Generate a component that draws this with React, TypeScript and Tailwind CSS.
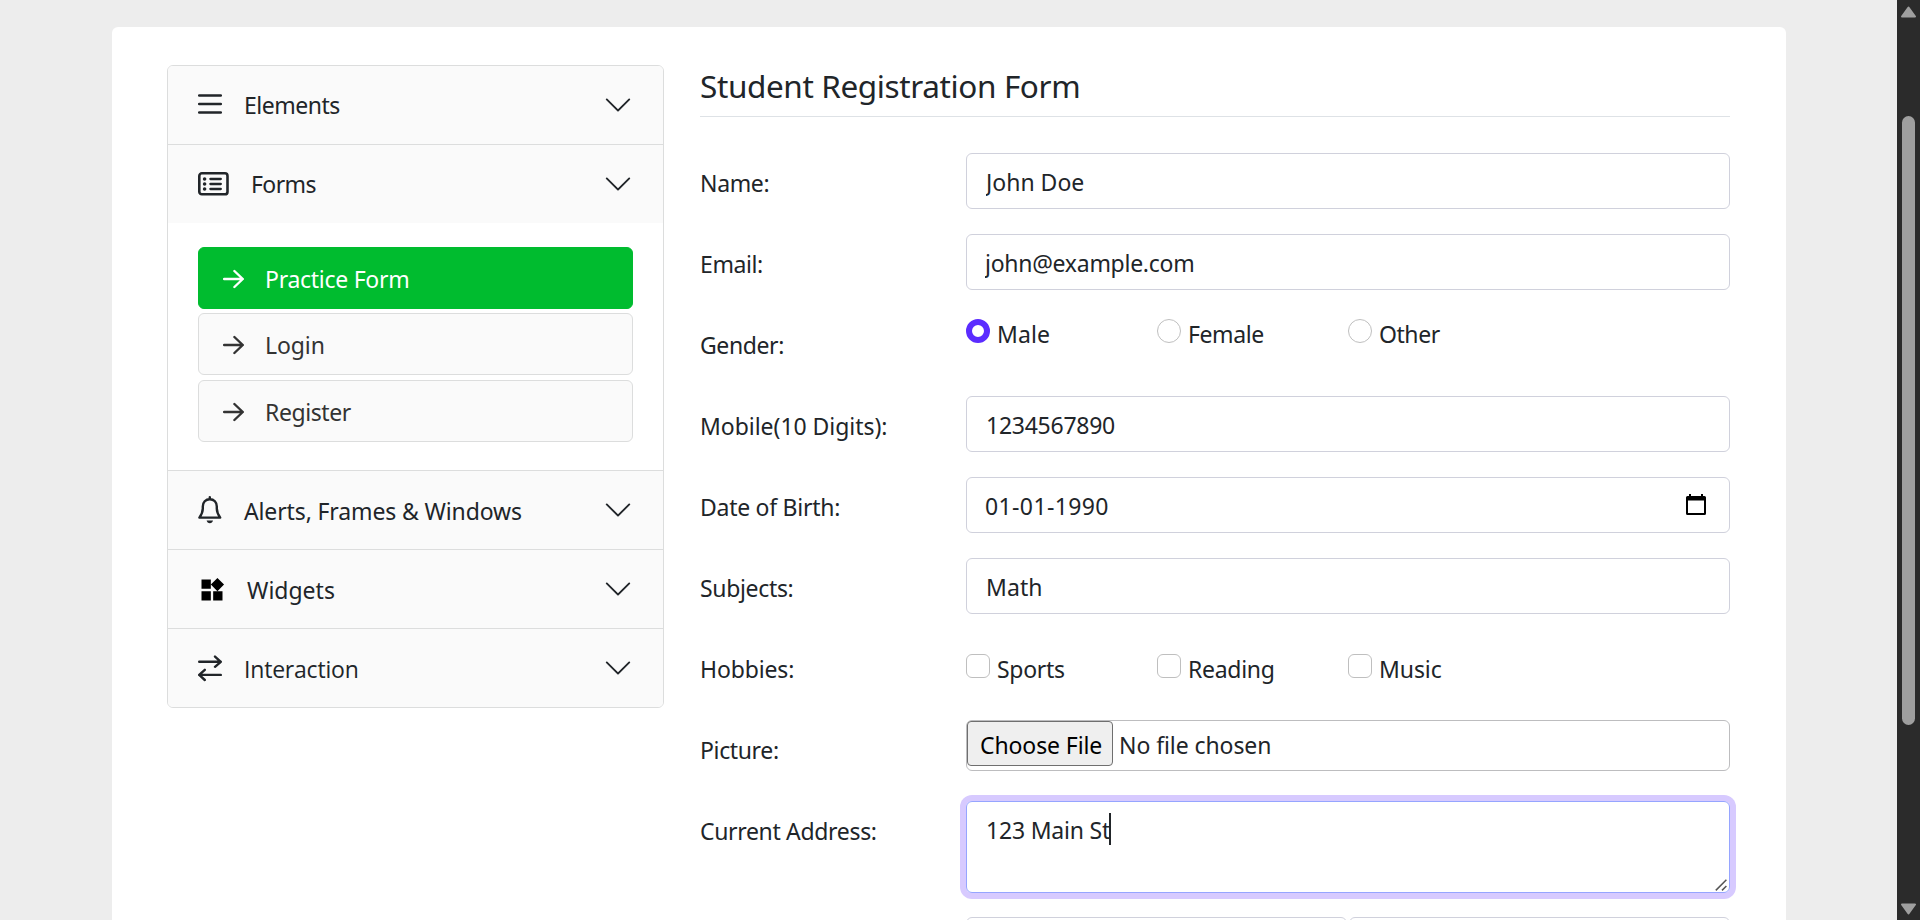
import type { ReactNode } from "react";
import { MdWidgets } from "react-icons/md";

const line = { fill: "none", stroke: "currentColor", strokeLinecap: "round", strokeLinejoin: "round" } as const;

function BarsIcon() {
  return (
    <svg className="h-6 w-6 shrink-0" viewBox="0 0 24 24" strokeWidth="2.5" {...line}>
      <path d="M1.2 2.5h21.6M1.2 11h21.6M1.2 19.5h21.6" />
    </svg>
  );
}

function ListCardIcon() {
  return (
    <svg className="h-6 w-[31px] shrink-0" viewBox="0 0 31 24" {...line}>
      <rect x="1.3" y="1.3" width="28.2" height="21" rx="2.6" strokeWidth="2.6" />
      <path d="M12.4 7h10.4M12.4 12h10.4M12.4 17h10.4" strokeWidth="2.3" />
      <g fill="currentColor" stroke="none">
        <circle cx="6.6" cy="7" r="1.8" />
        <circle cx="6.6" cy="12" r="1.8" />
        <circle cx="6.6" cy="17" r="1.8" />
      </g>
    </svg>
  );
}

function BellIcon() {
  return (
    <svg className="h-7 w-6 shrink-0" viewBox="0 0 24 28" strokeWidth="2.4" {...line}>
      <path d="M11.8 1.2v2M11.8 3.2c-4.2 0-7 3.2-7 7.2v2c0 3.4-1.2 6-3.4 9.2h20.8c-2.2-3.2-3.4-5.8-3.4-9.2v-2c0-4-2.8-7.2-7-7.2z" />
      <path d="M8.6 24.6h6.4c-.3 1.5-1.6 2.7-3.2 2.7s-2.9-1.2-3.2-2.7z" fill="currentColor" stroke="none" />
    </svg>
  );
}

function SwapIcon() {
  return (
    <svg className="h-7 w-6 shrink-0" viewBox="0 0 24 28" strokeWidth="2.4" {...line}>
      <path d="M1.2 7.8h21.6M17 2.6l5.8 5.2-5.8 5M22.8 20.9H1.2M6.8 15.8l-5.6 5.1 5.6 5.1" />
    </svg>
  );
}

function ArrowIcon() {
  return (
    <svg className="h-5 w-[21px] shrink-0" viewBox="0 0 21 20" strokeWidth="2.4" {...line}>
      <path d="M1.1 10h18.6M11.4 2l8.4 8-8.4 8" />
    </svg>
  );
}

function Chevron() {
  return (
    <svg className="ml-auto h-[30px] w-[30px] shrink-0" viewBox="0 0 16 16" fill="currentColor">
      <path d="M1.646 4.646a.5.5 0 0 1 .708 0L8 10.293l5.646-5.647a.5.5 0 0 1 .708.708l-6 6a.5.5 0 0 1-.708 0l-6-6a.5.5 0 0 1 0-.708z" />
    </svg>
  );
}

function Section({ icon, text, className = "" }: { icon: ReactNode; text: string; className?: string }) {
  return (
    <div>
      <div className="flex h-[78px] items-center bg-[#fafafa] px-[30px] text-[#212529]">
        {icon}
        <span className={`whitespace-nowrap ${className}`}>{text}</span>
        <Chevron />
      </div>
    </div>
  );
}

function SubItem({ text, className }: { text: string; className: string }) {
  return (
    <div className={`flex h-[62px] items-center rounded-[6px] border pl-6 ${className}`}>
      <span className="pt-px">
        <ArrowIcon />
      </span>
      <span className="pt-0.5 pl-[21px] whitespace-nowrap">{text}</span>
    </div>
  );
}

function Row({ label, className = "", children }: { label: string; className?: string; children: ReactNode }) {
  return (
    <div className="flex h-[81px] shrink-0">
      <div className={`w-[266px] shrink-0 pt-3 whitespace-nowrap ${className}`}>{label}</div>
      <div className="w-[764px]">{children}</div>
    </div>
  );
}

function Field({ value, className = "" }: { value: string; className?: string }) {
  return (
    <input
      readOnly
      value={value}
      className={`block h-14 w-full rounded-[6px] border border-[#d0d1dc] bg-white pt-0.5 outline-none ${className}`}
    />
  );
}

function Choice({ text, box, className = "" }: { text: string; box: string; className?: string }) {
  return (
    <label className="flex w-[191px]">
      <span className={`mt-[3px] mr-[7px] h-6 w-6 shrink-0 ${box}`} />
      <span className={`whitespace-nowrap ${className}`}>{text}</span>
    </label>
  );
}

const radioOff = "rounded-full border border-[#bfbfbf]";
const radioOn = "rounded-full border-[6px] border-[#5b2cff]";
const check = "rounded-[6px] border border-[#bfbfbf]";

export default function App() {
  return (
    <div className="flex h-[920px] w-[1920px] overflow-hidden bg-[#ededed] font-['Noto_Sans','Open_Sans',sans-serif] text-[23px] leading-9 text-[#212529]">
      <main className="h-full w-[1897px] overflow-hidden pt-[27px] pl-28">
        <div className="flex h-[960px] w-[1674px] items-start gap-9 rounded-[6px] bg-white pt-[38px] pl-[55px]">
          <nav className="w-[497px] shrink-0 divide-y divide-[#dcdddd] overflow-hidden rounded-[6px] border border-[#dcdddd]">
            <Section icon={<BarsIcon />} text="Elements" className="pl-[22px] tracking-[-0.5px]" />
            <div>
              <Section icon={<ListCardIcon />} text="Forms" className="pl-[22px] tracking-[-0.6px]" />
              <div className="h-[247px] px-[30px] pt-6">
                <SubItem text="Practice Form" className="border-[#00bc2f] bg-[#00bc2f] tracking-[-0.27px] text-white" />
                <SubItem text="Login" className="mt-1 border-[#dcdddd] bg-[#fafafa] tracking-[-0.1px] text-[#333]" />
                <SubItem text="Register" className="mt-[5px] border-[#dcdddd] bg-[#fafafa] tracking-[-0.4px] text-[#333]" />
              </div>
            </div>
            <Section icon={<BellIcon />} text="Alerts, Frames & Windows" className="pt-0.5 pl-[22px] tracking-[-0.13px]" />
            <Section
              icon={<MdWidgets className="mt-0.5 h-7 w-7 shrink-0 text-black" />}
              text="Widgets"
              className="pt-0.5 pl-[21px]"
            />
            <Section
              icon={<SwapIcon />}
              text="Interaction"
              className="pt-0.5 pl-[22px] font-['Open_Sans'] tracking-[-0.2px]"
            />
          </nav>

          <form className="flex w-[1030px] flex-col">
            <h1 className="mb-9 h-[52px] border-b border-[#dee2e6] text-[31.5px] leading-[42px] tracking-[-0.38px] whitespace-nowrap">
              Student Registration Form
            </h1>
            <Row label="Name:" className="tracking-[-0.35px]">
              <Field value="John Doe" className="pl-[19px]" />
            </Row>
            <Row label="Email:" className="tracking-[-0.4px]">
              <Field value="john@example.com" className="pl-[18px] tracking-[-0.27px]" />
            </Row>
            <Row label="Gender:" className="tracking-[-0.4px]">
              <div className="flex pt-px">
                <Choice text="Male" box={radioOn} className="tracking-[0.1px]" />
                <Choice text="Female" box={radioOff} className="tracking-[-0.4px]" />
                <Choice text="Other" box={radioOff} className="tracking-[-0.45px]" />
              </div>
            </Row>
            <Row label="Mobile(10 Digits):" className="tracking-[-0.04px]">
              <Field value="1234567890" className="pl-[19px] tracking-[-0.26px]" />
            </Row>
            <Row label="Date of Birth:" className="tracking-[-0.27px]">
              <div className="flex h-14 items-center justify-between rounded-[6px] border border-[#d0d1dc] pr-[23px] pl-[18px]">
                <span className="pt-0.5 tracking-[0.38px]">01-01-1990</span>
                <svg className="mb-px h-[21px] w-5 text-black" viewBox="0 0 20 21">
                  <path
                    fill="currentColor"
                    fillRule="evenodd"
                    d="M3 0h2v2h10V0h2v2h1.5a1.5 1.5 0 0 1 1.5 1.5v16a1.5 1.5 0 0 1-1.5 1.5h-17A1.5 1.5 0 0 1 0 19.500V3.500A1.500 1.500 0 0 1 1.500 2H3zM2 6.600V19h16V6.600z"
                  />
                </svg>
              </div>
            </Row>
            <Row label="Subjects:" className="tracking-[-0.33px]">
              <Field value="Math" className="pl-[19px] tracking-[0.1px]" />
            </Row>
            <Row label="Hobbies:" className="tracking-[-0.14px]">
              <div className="flex pt-3">
                <Choice text="Sports" box={check} className="tracking-[-0.3px]" />
                <Choice text="Reading" box={check} className="tracking-[-0.3px]" />
                <Choice text="Music" box={check} className="tracking-[-0.1px]" />
              </div>
            </Row>
            <Row label="Picture:" className="tracking-[-0.36px]">
              <div className="flex h-[51px] rounded-[6px] border border-[#bdbdbf]">
                <span className="h-[45px] w-[146px] rounded-[4px] border border-[#6f6f6f] bg-[#efefef] pt-[5px] pl-3 tracking-[-0.1px] whitespace-nowrap text-black">
                  Choose File
                </span>
                <span className="pt-1.5 pl-1.5 tracking-[-0.08px]">No file chosen</span>
              </div>
            </Row>
            <div className="flex h-[116px] shrink-0">
              <div className="w-[266px] shrink-0 pt-3 tracking-[-0.33px] whitespace-nowrap">Current Address:</div>
              <div className="relative h-[92px] w-[764px] rounded-[6px] border border-[#96a5ff] pt-[10px] pl-[19px] tracking-[-0.2px] ring-[6px] ring-[#d7caff]">
                123 Main St
                <span className="absolute top-[11px] left-[142px] h-8 w-0.5 bg-[#212529]" />
                <svg className="absolute right-0.5 bottom-px h-3 w-3" viewBox="0 0 12 12" stroke="#555" strokeWidth="1.5">
                  <path d="M.8 11.4L11.4.8M7 11.4l4.4-4.4" />
                </svg>
              </div>
            </div>
            <div className="flex gap-0.5 pl-[266px]">
              <div className="h-14 flex-1 rounded-[6px] border border-[#d0d1dc]" />
              <div className="h-14 flex-1 rounded-[6px] border border-[#d0d1dc]" />
            </div>
          </form>
        </div>
      </main>

      <aside className="flex h-full w-[23px] flex-col items-center bg-[#2b2b2b] pt-1.5 pr-[1px] pb-[5px] text-[#9f9f9f]">
        <svg className="h-3 w-[15px] shrink-0" viewBox="0 0 15 12" fill="currentColor" stroke="currentColor" strokeWidth="2" strokeLinejoin="round">
          <path d="M7.5 1.5L14 10.5H1z" />
        </svg>
        <div className="mt-[98px] h-[609px] w-[13px] shrink-0 rounded-full bg-[#9f9f9f]" />
        <svg className="mt-auto h-3 w-[15px] shrink-0" viewBox="0 0 15 12" fill="currentColor" stroke="currentColor" strokeWidth="2" strokeLinejoin="round">
          <path d="M7.5 10.5L14 1.5H1z" />
        </svg>
      </aside>
    </div>
  );
}
